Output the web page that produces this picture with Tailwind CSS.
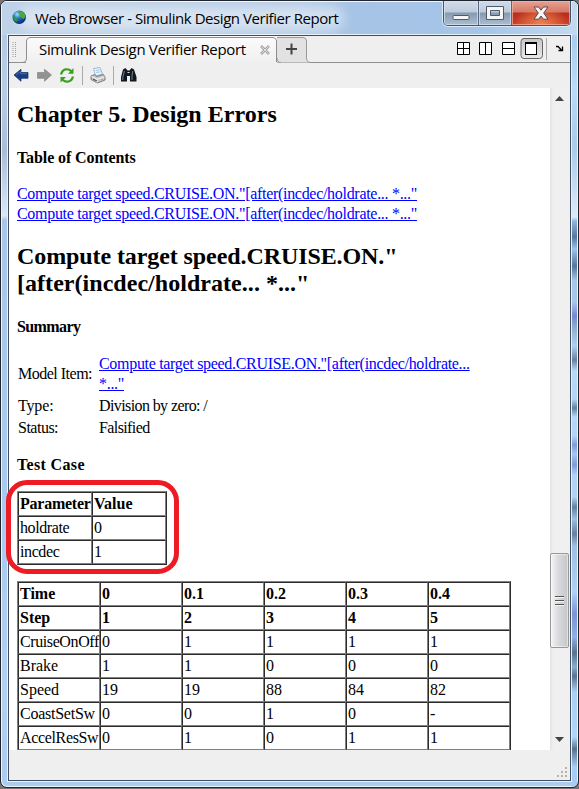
<!DOCTYPE html>
<html lang="en">
<head>
<meta charset="utf-8">
<title>Web Browser - Simulink Design Verifier Report</title>
<script src="https://cdn.jsdelivr.net/npm/@tailwindcss/browser@4"></script>
</head>
<body class="h-[789px] w-[579px] overflow-hidden bg-[#77736f] text-black">
<div class="relative flex h-[788px] w-[579px] flex-col overflow-hidden rounded-[7px] border border-[#20242c] bg-[linear-gradient(180deg,#b4cae4_0px,#b7cde6_90px,#a9bddb_150px,#dce8f5_215px,#a8c6e8_219px,#a9caef_500px,#b3d0f0_700px,#adcbee_788px)] shadow-[inset_0_0_0_1px_#edf5fc]">
  <div aria-hidden="true" class="absolute top-[36px] right-[1px] h-[750px] w-[5px] bg-[linear-gradient(180deg,#a9cdf0_0px,#b9daf8_50px,#a9caeb_110px,#dceafa_180px,#8fb7e2_184px,#55779d_200px,#9bc3eb_212px,#55779d_229px,#a7c7ea_244px,#a6c7ea_265px,#7589ce_279px,#96b5d3_294px,#acd0f3_309px,#68829f_323px,#b6d9fa_334px,#b2d5f7_362px,#65819f_371px,#b4d8f9_380px,#b3d4f7_399px,#8199da_408px,#a7c6f0_417px,#8199da_428px,#afd2f7_438px,#b0d3f5_460px,#66809d_470px,#9bc0e3_482px,#687f9d_497px,#9dbfe3_509px,#add2f7_555px,#7b93d5_577px,#8fb0e3_600px,#58728f_616px,#89acd0_630px,#58728f_639px,#aacff4_655px,#afd5fb_700px,#58728f_712px,#a6cdf4_730px)]"></div>

  <header class="relative flex h-[34px] shrink-0 items-start bg-[linear-gradient(90deg,#bfd2e7_0px,#b5cce6_300px,#a6c4e5_350px,#a4c5e9_480px,#c3daf0_579px)] shadow-[inset_0_1px_0_#f2f7fc,inset_1px_0_0_#edf5fc,inset_-1px_0_0_#edf5fc]">
    <div aria-hidden="true" class="absolute top-[6px] left-[18px] h-[23px] w-[325px] rounded-full bg-white/45 blur-[6px]"></div>
    <svg class="relative mt-[9px] ml-[11px] shrink-0" width="15" height="15" viewBox="0 0 15 15">
      <defs><radialGradient id="globe" cx="35%" cy="28%" r="75%"><stop offset="0" stop-color="#a9ddf5"/><stop offset=".4" stop-color="#2a78cc"/><stop offset="1" stop-color="#08246e"/></radialGradient></defs>
      <circle cx="7.2" cy="7.2" r="6.7" fill="url(#globe)"/>
      <path d="M7 1.2 10.5 1.4 12.8 4 13.6 7 11.5 9.2 9.5 7.4 7.6 7.2 8.2 5 6.3 3.2Z" fill="#49a93d"/>
      <path d="M1.2 5.5 3.2 6.8 5.4 9 4.6 12 2 10Z" fill="#2c9b47"/>
    </svg>
    <h1 class="relative mt-[6px] ml-[8px] font-['Open_Sans',sans-serif] text-[15px] leading-[22px] tracking-[-0.44px] whitespace-nowrap">Web Browser - Simulink Design Verifier Report</h1>
    <div class="absolute top-0 right-[7px] flex h-[25px] w-[128px] overflow-hidden rounded-b-[5px] border border-t-0 border-[#47556a] shadow-[0_0_0_1px_#dce9f6]">
      <div class="flex w-[35px] justify-center border-r border-[#566880] bg-[linear-gradient(180deg,#d0dce9_0px,#bccbdd_11px,#8799ae_12px,#a9bed4_24px)] shadow-[inset_0_0_0_1px_#dae6f0b0]">
        <svg width="18" height="24" viewBox="0 0 18 24"><rect x="1" y="14.5" width="16" height="4" rx="1" fill="#f5f5f5" stroke="#505a6b"/></svg>
      </div>
      <div class="flex w-[33px] justify-center border-r border-[#566880] bg-[linear-gradient(180deg,#d0dce9_0px,#bccbdd_11px,#8799ae_12px,#a9bed4_24px)] shadow-[inset_0_0_0_1px_#dae6f0b0]">
        <svg width="20" height="24" viewBox="0 0 20 24"><path fill="#f5f5f5" fill-rule="evenodd" stroke="#505a6b" d="M1.500 5.500H18.500V18.500H1.500ZM5.500 9.500H14.500V14.500H5.500Z"/></svg>
      </div>
      <div class="flex flex-1 justify-center bg-[radial-gradient(ellipse_at_50%_100%,#ef8550_0%,#ce463000_65%),linear-gradient(180deg,#e7a195_0px,#d47867_11px,#b82c1b_12px,#cb422c_24px)] shadow-[inset_0_0_0_1px_#f2b8a9b0]">
        <svg width="20" height="24" viewBox="0 0 20 24"><path fill="#f5f5f5" stroke="#59475a" stroke-linejoin="round" d="M3 6H7.500L10 9.200 12.500 6H17L12.700 12 17 18.200H12.500L10 15 7.500 18.200H3L7.300 12Z"/></svg>
      </div>
    </div>
  </header>

  <main class="relative ml-[7px] flex h-[746px] w-[563px] shrink-0 flex-col border border-[#3f4e61] bg-[#efefef] shadow-[0_0_0_1px_#e8f2fb]">
    <div class="relative flex h-[27px] shrink-0 border-b border-[#8e8e8e]">
      <svg class="shrink-0" width="17" height="27" viewBox="0 0 17 27"><path d="M4 6V22M6.500 6V22" stroke="#9b9b9b" stroke-dasharray="1 1"/></svg>
      <div class="relative -mb-px flex h-[27px] w-[251px] shrink-0 items-start bg-linear-to-b from-[#fcfcfc] to-[#efefef]">
        <svg class="absolute top-0 -left-[17px]" width="270" height="27" viewBox="0 0 270 27"><path d="M0 26.500H13Q17.500 26.500 17.500 22V5Q17.500 1.500 21 1.500H264Q267.500 1.500 267.500 5V26" fill="none" stroke="#8e8e8e"/></svg>
        <span class="mt-[2px] ml-[13px] font-['Open_Sans',sans-serif] text-[15px] leading-[22px] tracking-[-0.33px] whitespace-nowrap">Simulink Design Verifier Report</span>
        <svg class="absolute top-[9px] left-[234px]" width="10" height="10" viewBox="0 0 10 10"><path d="M1 1 9 9M9 1 1 9" stroke="#a5a5a5" stroke-width="2.600"/><path d="M1.500 1.500 8.500 8.500M8.500 1.500 1.500 8.500" stroke="#e6e6e6" stroke-width=".9"/></svg>
      </div>
      <svg class="shrink-0" width="40" height="27" viewBox="0 0 40 27"><path d="M0 1.500H26Q29.500 1.500 29.500 5V22Q29.500 26.500 34 26.500H0Z" fill="#e2e2e2"/><path d="M0 1.500H26Q29.500 1.500 29.500 5V22Q29.500 26.500 34 26.500M0 22Q0 26.500 4 26.500" fill="none" stroke="#999"/><path d="M9 13H20M14.500 7.500V18.500" stroke="#444" stroke-width="2"/></svg>
      <div class="ml-auto flex items-start">
        <svg width="118" height="26" viewBox="0 0 118 26">
          <defs><linearGradient id="pressed" x2="0" y2="1"><stop stop-color="#c6c6c6"/><stop offset="1" stop-color="#e9e9e9"/></linearGradient></defs>
          <g fill="#fff" stroke="#000"><path d="M5.500 6.500H17.500V18.500H5.500ZM11.500 6V19M5 12.500H18"/><path d="M27.500 6.500H39.500V18.500H27.500ZM33.500 6V19"/><path d="M50.500 6.500H62.500V18.500H50.500ZM50 12.500H63"/></g>
          <rect x="69" y="2.500" width="21.500" height="20" rx="3" fill="url(#pressed)" stroke="#666"/>
          <rect x="73.500" y="6.500" width="11" height="12" fill="#fff" stroke="#000"/><path d="M73 7H85" stroke="#000" stroke-width="2"/>
          <path d="M94.500 2V24" stroke="#aaa"/>
          <path d="M104 10.500H106L109.500 14M110.500 10.500V14.500H106.500" fill="none" stroke="#000" stroke-width="1.300"/>
        </svg>
      </div>
    </div>

    <div class="flex h-[25px] shrink-0 items-start">
      <svg width="135" height="25" viewBox="0 0 135 25">
        <path d="M5 12 12 6.300V9.500H19V15.300H12V18.300Z" fill="#173f87" stroke="#112d66" stroke-width=".7"/><path d="M7 12 11.500 8.500V10.700H18" fill="none" stroke="#557bb9" stroke-width=".8"/>
        <path d="M42.500 12 35.500 6.300V9.500H28.500V15.300H35.500V18.300Z" fill="#929292" stroke="#858585" stroke-width=".7"/>
        <path d="M52 11.500C53.500 5.500 59 5 62.500 8.300M64 13.500C62.500 19.500 57 19.800 53.500 16.700" fill="none" stroke="#3ca01f" stroke-width="2.200"/><path d="M64.500 5V10.700H59ZM51.500 19.500V14H57Z" fill="#3ca01f"/>
        <path d="M73.500 3V22M104.500 3V22" stroke="#aaa"/>
        <path d="M84.500 5.500 91 4.500 93.500 11 86.500 13Z" fill="#e9f5ff" stroke="#8ba9c9" stroke-width=".8"/><path d="M86.500 7.500 90.500 6.800M87 9.500 91.500 8.800" stroke="#89b7e3" stroke-width=".8"/>
        <path d="M82 13 86 11.500 87.500 13.500 94.500 11.500 96 14V17L88.500 20 82 16.500Z" fill="#c8c8c8" stroke="#646464" stroke-width=".8"/><path d="M82.500 13.500 88 16.300 95.500 13.800M88 16.500V19.500" fill="none" stroke="#f7f7f7"/><path d="M84 16 88 18" stroke="#444"/><path d="M92 16.700H94" stroke="#c2a843"/>
        <path d="M114 6.500 116.500 5 118.500 7.500 120.500 7.500 122.500 5 125 6.500 127.500 14V18.500H121V13H118V18.500H112V14Z" fill="#111820"/><path d="M115.500 8 113.800 14V17M123.700 8 123 13V17" fill="none" stroke="#7591a6" stroke-width=".9"/><path d="M118.500 9.500H120.500" stroke="#dae3eb"/>
      </svg>
    </div>

    <div class="flex h-[662px] shrink-0 overflow-y-clip bg-white font-['Liberation_Serif',serif] text-[16px]">
      <article class="w-[541px] shrink-0 pl-[8px]">
        <h2 class="mt-[12px] text-[24px] leading-[28px] font-bold tracking-[0.03px]">Chapter 5. Design Errors</h2>
        <h3 class="mt-[20px] text-[16px] leading-[20px] font-bold tracking-[-0.1px]">Table of Contents</h3>
        <nav class="mt-[16px] flex flex-col items-start leading-[20px] tracking-[-0.3px] text-[#0000ff] underline">
          <a>Compute target speed.CRUISE.ON."[after(incdec/holdrate... *..."</a>
          <a>Compute target speed.CRUISE.ON."[after(incdec/holdrate... *..."</a>
        </nav>
        <h2 class="mt-[19px] text-[24px] leading-[27px] font-bold"><span class="tracking-[-0.09px]">Compute target speed.CRUISE.ON."</span><br><span class="tracking-[0.04px]">[after(incdec/holdrate... *..."</span></h2>
        <h3 class="mt-[20px] text-[16px] leading-[20px] font-bold tracking-[-0.6px]">Summary</h3>
        <div class="mt-[17px] ml-px grid grid-cols-[81px_auto] items-center leading-[20px]">
          <span class="tracking-[-0.5px]">Model Item:</span><a class="tracking-[-0.31px] text-[#0000ff] underline">Compute target speed.CRUISE.ON."[after(incdec/holdrate...<br>*..."</a>
          <span class="mt-[2px] tracking-[-0.15px]">Type:</span><span class="mt-[2px] tracking-[-0.6px]">Division by zero: /</span>
          <span class="mt-[2px] tracking-[-0.5px]">Status:</span><span class="mt-[2px] tracking-[-0.6px]">Falsified</span>
        </div>
        <h3 class="mt-[17px] text-[16px] leading-[20px] font-bold tracking-[0.35px]">Test Case</h3>
        <div class="relative mt-[16px] w-[150px]">
          <table class="w-[150px] table-fixed border-separate border-spacing-0 border border-t-[#808080] border-r-[#2c2c2c] border-b-[#2c2c2c] border-l-[#808080] text-left leading-[20px] [&_td]:h-[24px] [&_td]:border [&_td]:border-t-[#2c2c2c] [&_td]:border-r-[#808080] [&_td]:border-b-[#808080] [&_td]:border-l-[#2c2c2c] [&_td]:p-px [&_td]:whitespace-nowrap">
            <tbody>
              <tr class="font-bold"><td class="tracking-[-0.25px]">Parameter</td><td>Value</td></tr>
              <tr><td class="tracking-[-0.4px]">holdrate</td><td>0</td></tr>
              <tr><td class="tracking-[-0.4px]">incdec</td><td>1</td></tr>
            </tbody>
          </table>
          <div class="absolute -top-[11px] -left-[11px] h-[94px] w-[173px] rounded-[21px] border-[5px] border-[#ed1c24]"></div>
        </div>
        <table class="mt-[16px] w-[494px] table-fixed border-separate border-spacing-0 border border-t-[#808080] border-r-[#2c2c2c] border-b-[#2c2c2c] border-l-[#808080] text-left leading-[20px] [&_td]:h-[24px] [&_td]:border [&_td]:border-t-[#2c2c2c] [&_td]:border-r-[#808080] [&_td]:border-b-[#808080] [&_td]:border-l-[#2c2c2c] [&_td]:p-px [&_td]:whitespace-nowrap">
          <tbody>
            <tr class="font-bold"><td>Time</td><td>0</td><td>0.1</td><td>0.2</td><td>0.3</td><td>0.4</td></tr>
            <tr class="font-bold"><td>Step</td><td>1</td><td>2</td><td>3</td><td>4</td><td>5</td></tr>
            <tr><td class="tracking-[-0.4px]">CruiseOnOff</td><td>0</td><td>1</td><td>1</td><td>1</td><td>1</td></tr>
            <tr><td>Brake</td><td>1</td><td>1</td><td>0</td><td>0</td><td>0</td></tr>
            <tr><td>Speed</td><td>19</td><td>19</td><td>88</td><td>84</td><td>82</td></tr>
            <tr><td class="tracking-[-0.25px]">CoastSetSw</td><td>0</td><td>0</td><td>1</td><td>0</td><td>-</td></tr>
            <tr><td class="tracking-[-0.35px]">AccelResSw</td><td>0</td><td>1</td><td>0</td><td>1</td><td>1</td></tr>
          </tbody>
        </table>
      </article>
      <div class="flex flex-1 flex-col items-center bg-linear-to-r from-[#e3e3e3] via-[#efefef] via-15% to-[#f0f0f0]">
        <svg class="mt-[7px] mr-[2px] shrink-0" width="9" height="6" viewBox="0 0 9 6"><path d="M0 6 4.500 1 9 6Z" fill="#444"/></svg>
        <div class="mt-[452px] mr-px flex h-[95px] w-[19px] shrink-0 items-center justify-center rounded-[2px] border border-[#979797] bg-linear-to-r from-[#f5f5f5] via-[#d8d9dc] via-45% to-[#c5c6ca] shadow-[inset_0_0_0_1px_#ffffff80]">
          <svg width="9" height="11" viewBox="0 0 9 11"><path d="M0 1.500H9M0 5.500H9M0 9.500H9" stroke="#555"/><path d="M0 2.500H9M0 6.500H9M0 10.500H9" stroke="#f5f5f5"/></svg>
        </div>
        <svg class="mt-[88px] mr-[2px] shrink-0" width="9" height="6" viewBox="0 0 9 6"><path d="M0 1H9L4.500 6Z" fill="#444"/></svg>
      </div>
    </div>
    <footer class="flex flex-1 items-end justify-end pr-[2px] pb-[2px]">
      <svg width="11" height="11" viewBox="0 0 11 11"><path d="M8 0h2v2h-2zM4 4h2v2h-2zM8 4h2v2h-2zM0 8h2v2h-2zM4 8h2v2h-2zM8 8h2v2h-2z" fill="#b8b4a3"/></svg>
    </footer>
  </main>
</div>
</body>
</html>
